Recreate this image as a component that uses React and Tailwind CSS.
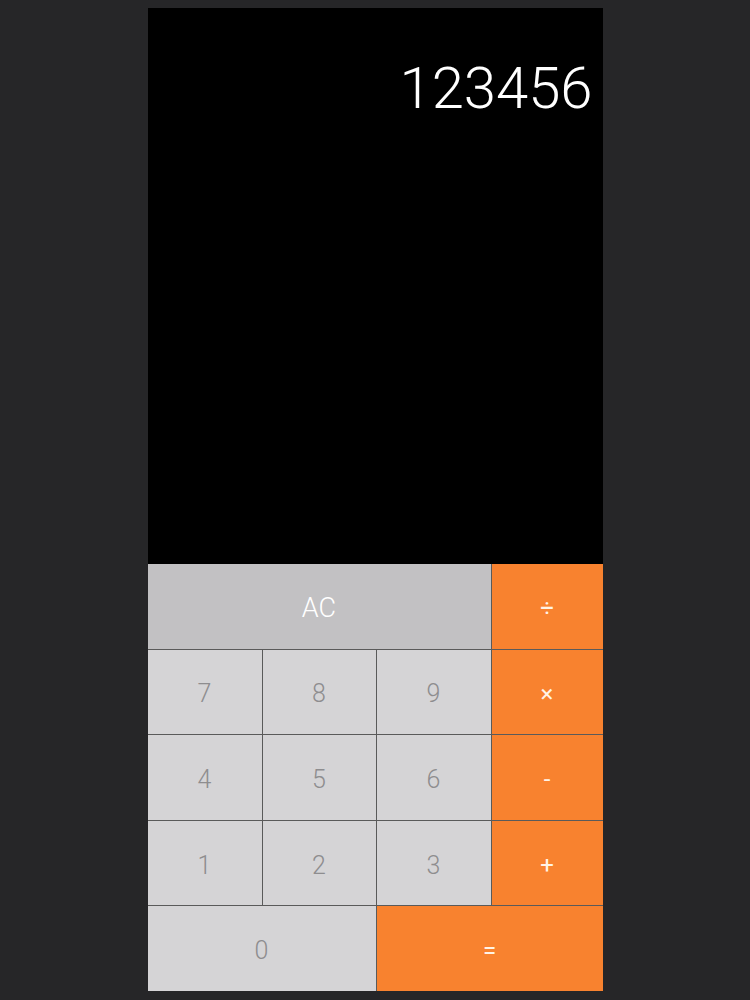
import React from 'react';

const keys = [
  { label: 'AC', span: 'col-span-3', tone: 'ac' },
  { label: '÷', tone: 'op' },
  { label: '7' },
  { label: '8' },
  { label: '9' },
  { label: '×', tone: 'op' },
  { label: '4' },
  { label: '5' },
  { label: '6' },
  { label: '-', tone: 'op' },
  { label: '1' },
  { label: '2' },
  { label: '3' },
  { label: '+', tone: 'op' },
  { label: '0', span: 'col-span-2' },
  { label: '=', span: 'col-span-2', tone: 'op' },
];

function Key({ label, span = '', tone }) {
  let cls = 'bg-[#d5d4d6] text-[#8e8d8f] text-[25px] font-light';
  if (tone === 'ac') cls = 'bg-[#c2c1c3] text-white text-[27px] font-light';
  if (tone === 'op') cls = 'bg-[#f8822f] text-[#fff3e6] text-[24px] font-normal';
  return (
    <button className={`${span} ${cls} flex items-center justify-center pt-1 leading-none`}>
      {label}
    </button>
  );
}

export default function App() {
  return (
    <div className="min-h-screen bg-[#262628] pt-2 font-['Roboto',sans-serif]">
      <div className="mx-auto flex h-[983px] w-[455px] flex-col">
        <div className="h-[556px] bg-black pt-[51px] pr-[10px] text-right text-[58px] font-light leading-none text-white">
          123456
        </div>
        <div className="grid flex-1 grid-cols-[114px_113px_114px_1fr] grid-rows-5 gap-px bg-[#5a5a5a]">
          {keys.map((k) => (
            <Key key={k.label} {...k} />
          ))}
        </div>
      </div>
    </div>
  );
}
